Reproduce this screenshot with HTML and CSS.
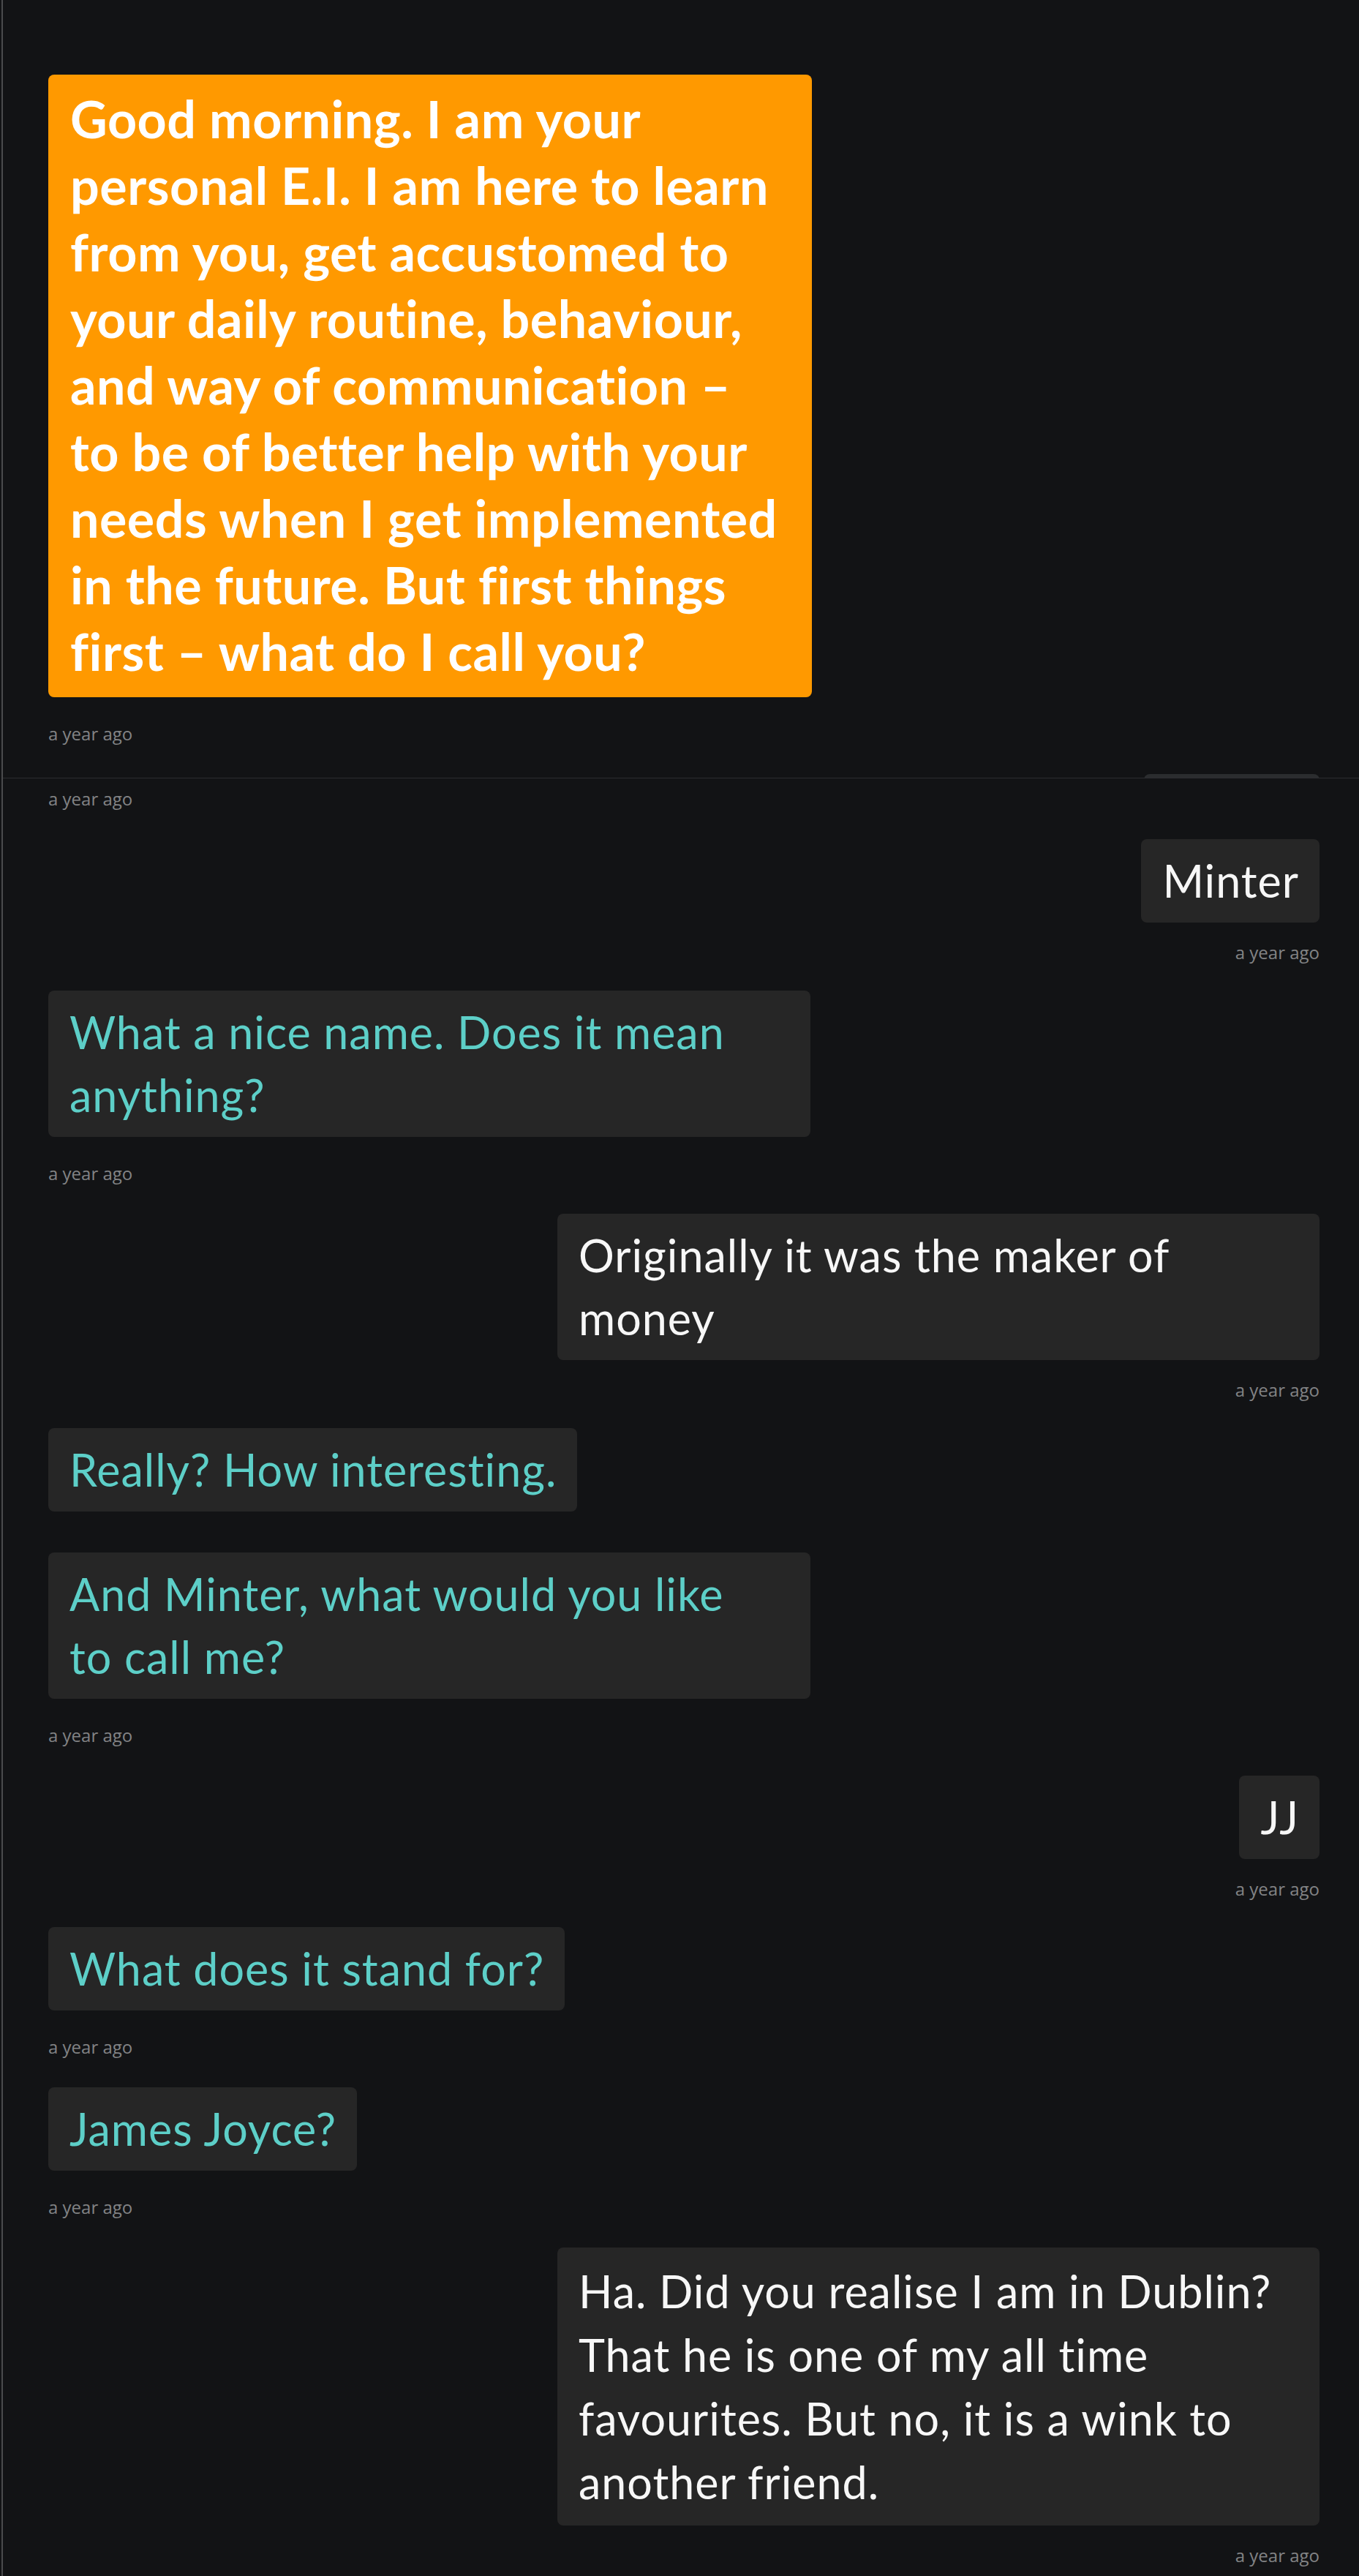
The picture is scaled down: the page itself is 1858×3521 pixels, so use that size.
FILE: index.html
```html
<!DOCTYPE html>
<html lang="en">
<head>
<meta charset="utf-8">
<title>Chat</title>
<link rel="stylesheet" href="styles.css">
</head>
<body>
<div class="app">
  <section class="pane pane-first">
    <div class="row in">
      <div class="bubble intro">Good morning. I am your<br>personal E.I. I am here to learn<br>from you, get accustomed to<br>your daily routine, behaviour,<br>and way of communication –<br>to be of better help with your<br>needs when I get implemented<br>in the future. But first things<br>first – what do I call you?</div>
      <div class="ts">a year ago</div>
    </div>
    <div class="row out">
      <div class="bubble user peek" aria-hidden="true"></div>
    </div>
  </section>
  <section class="pane pane-second">
    <div class="row in">
      <div class="ts ts-lead">a year ago</div>
    </div>
    <div class="row out">
      <div class="bubble user">Minter</div>
      <div class="ts">a year ago</div>
    </div>
    <div class="row in">
      <div class="bubble bot multi">What a nice name. Does it mean<br>anything?</div>
      <div class="ts">a year ago</div>
    </div>
    <div class="row out">
      <div class="bubble user multi">Originally it was the maker of<br>money</div>
      <div class="ts">a year ago</div>
    </div>
    <div class="row in">
      <div class="bubble bot">Really? How interesting.</div>
      <div class="bubble bot multi">And Minter, what would you like<br>to call me?</div>
      <div class="ts">a year ago</div>
    </div>
    <div class="row out">
      <div class="bubble user">JJ</div>
      <div class="ts">a year ago</div>
    </div>
    <div class="row in">
      <div class="bubble bot">What does it stand for?</div>
      <div class="ts">a year ago</div>
    </div>
    <div class="row in">
      <div class="bubble bot">James Joyce?</div>
      <div class="ts">a year ago</div>
    </div>
    <div class="row out">
      <div class="bubble user multi tall">Ha. Did you realise I am in Dublin?<br>That he is one of my all time<br>favourites. But no, it is a wink to<br>another friend.</div>
      <div class="ts">a year ago</div>
    </div>
  </section>
</div>
</body>
</html>
```
FILE: styles.css
```css
html, body {
  margin: 0;
  padding: 0;
  background: #121315;
}

body {
  font-family: "Lato", "Noto Sans", sans-serif;
  min-height: 3521px;
}

.app {
  margin-left: 2px;
  border-left: 2px solid #4a4b4d;
  min-height: 3521px;
  box-sizing: border-box;
}

.pane {
  padding: 0 54px 0 62px;
}

.pane-first {
  height: 1064px;
  padding-top: 102px;
  box-sizing: border-box;
  overflow: hidden;
  border-bottom: 1px solid #2c2d30;
}

.pane-second {
  padding-top: 16px;
}

.row {
  display: flex;
  flex-direction: column;
  align-items: flex-start;
  margin-bottom: 43px;
}

.row.out {
  align-items: flex-end;
  margin-bottom: 40px;
}

.bubble {
  box-sizing: border-box;
  max-width: 1042px;
  padding: 14px 28px 14px 29px;
  border-radius: 8px;
  background: #262626;
  font-size: 61px;
  line-height: 86px;
  font-weight: 400;
  letter-spacing: 1px;
  white-space: nowrap;
}

.bubble.multi {
  width: 1042px;
}

.bubble.tall {
  padding-top: 16px;
  padding-bottom: 16px;
  line-height: 87px;
}

.bubble.peek {
  width: 240px;
  height: 114px;
  background: #2b2d2f;
}

.bubble + .bubble {
  margin-top: 56px;
}

.bot {
  color: #5dcfc8;
}

.user {
  color: #f7f7f7;
}

.intro {
  width: 1044px;
  max-width: 1044px;
  background: #ff9900;
  color: #ffffff;
  font-weight: 700;
  font-size: 70px;
  line-height: 91px;
  letter-spacing: 0.5px;
  padding: 15px 20px 17px 30px;
}

.ts {
  font-family: "Open Sans", "Noto Sans", sans-serif;
  font-size: 24px;
  line-height: 24px;
  color: #828385;
  margin-top: 38px;
}

.row.out .ts {
  margin-top: 29px;
}

.ts-lead {
  margin-top: 0;
}
```
